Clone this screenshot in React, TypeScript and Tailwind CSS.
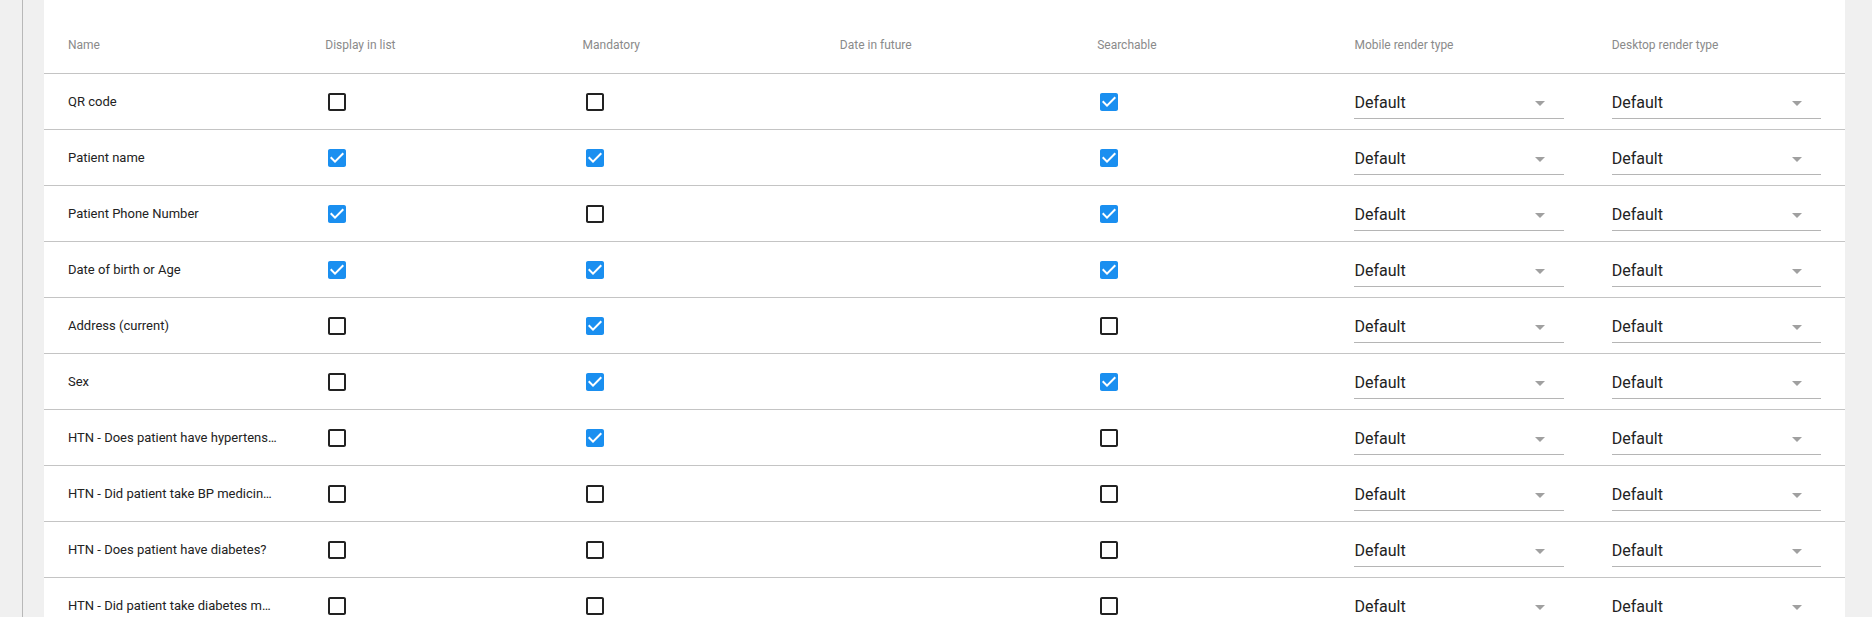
import React from 'react';

interface Field {
  name: string;
  display: boolean;
  mandatory: boolean;
  searchable: boolean;
}

const fields: Field[] = [
  { name: 'QR code', display: false, mandatory: false, searchable: true },
  { name: 'Patient name', display: true, mandatory: true, searchable: true },
  { name: 'Patient Phone Number', display: true, mandatory: false, searchable: true },
  { name: 'Date of birth or Age', display: true, mandatory: true, searchable: true },
  { name: 'Address (current)', display: false, mandatory: true, searchable: false },
  { name: 'Sex', display: false, mandatory: true, searchable: true },
  { name: 'HTN - Does patient have hypertension?', display: false, mandatory: true, searchable: false },
  { name: 'HTN - Did patient take BP medicine today?', display: false, mandatory: false, searchable: false },
  { name: 'HTN - Does patient have diabetes?', display: false, mandatory: false, searchable: false },
  { name: 'HTN - Did patient take diabetes medicine?', display: false, mandatory: false, searchable: false },
];

const headers = [
  'Name',
  'Display in list',
  'Mandatory',
  'Date in future',
  'Searchable',
  'Mobile render type',
  'Desktop render type',
];

// material-style checkbox icons (24px, box inset 3px)
const Checkbox: React.FC<{ checked: boolean }> = ({ checked }) =>
  checked ? (
    <svg width="24" height="24" viewBox="0 0 24 24" className="block">
      <path
        d="M19 3H5c-1.11 0-2 .9-2 2v14c0 1.1.89 2 2 2h14c1.11 0 2-.9 2-2V5c0-1.1-.89-2-2-2zm-9 14l-5-5 1.41-1.41L10 14.17l7.59-7.59L19 8l-9 9z"
        fill="#1a8ff0"
      />
    </svg>
  ) : (
    <svg width="24" height="24" viewBox="0 0 24 24" className="block">
      <path
        d="M19 5v14H5V5h14m0-2H5c-1.1 0-2 .9-2 2v14c0 1.1.9 2 2 2h14c1.1 0 2-.9 2-2V5c0-1.1-.9-2-2-2z"
        fill="#222"
      />
    </svg>
  );

const RenderSelect: React.FC = () => (
  <div className="w-full h-[32px] mt-[2px] border-b border-[#b5b5b5] flex items-center pt-[1px]">
    <span className="flex-1 text-[16px] leading-[19px] text-[#222]">Default</span>
    <svg width="24" height="24" viewBox="0 0 24 24" className="mr-[12px]">
      <path d="M7 10l5 5 5-5z" fill="#a0a0a0" />
    </svg>
  </div>
);

const App: React.FC = () => {
  return (
    <div
      className="w-full h-[617px] overflow-hidden bg-[#f0f0f0] flex"
      style={{ fontFamily: 'Roboto, "Liberation Sans", sans-serif' }}
    >
      <div className="w-[44px] shrink-0 pl-[22px]">
        <div className="w-px h-full bg-[#b8b8b8]" />
      </div>

      <div className="flex-1 bg-white pt-[17px]">
        <div className="grid grid-cols-7 h-[57px] border-b border-[#c4c4c4] items-center">
          {headers.map(h => (
            <div key={h} className="px-6 text-[12px] text-[#8a8a8a] truncate">
              {h}
            </div>
          ))}
        </div>

        {fields.map(f => (
          <div
            key={f.name}
            className="grid grid-cols-7 h-[56px] border-b border-[#c4c4c4] items-center"
          >
            <div className="px-6 text-[13px] text-[#222] truncate">{f.name}</div>
            <div className="px-6">
              <Checkbox checked={f.display} />
            </div>
            <div className="px-6">
              <Checkbox checked={f.mandatory} />
            </div>
            <div className="px-6" />
            <div className="px-6">
              <Checkbox checked={f.searchable} />
            </div>
            <div className="px-6">
              <RenderSelect />
            </div>
            <div className="px-6">
              <RenderSelect />
            </div>
          </div>
        ))}
      </div>

      <div className="w-[27px] shrink-0" />
    </div>
  );
};

export default App;
